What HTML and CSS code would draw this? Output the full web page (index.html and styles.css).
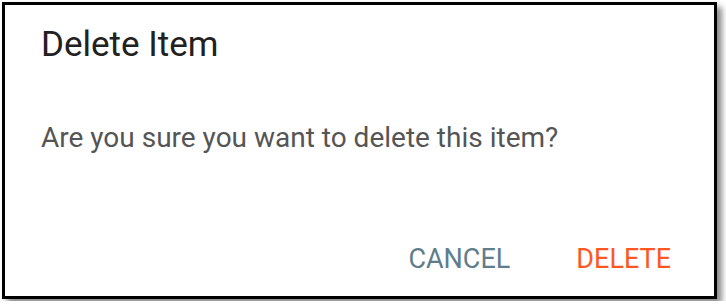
FILE: index.html
```html
<!DOCTYPE html>
<html>
<head>
<meta charset="utf-8">
<link rel="stylesheet" href="styles.css">
</head>
<body>
<div class="dialog">
  <h2 class="title">Delete Item</h2>
  <p class="message">Are you sure you want to delete this item?</p>
  <div class="actions">
    <button class="btn btn-cancel">CANCEL</button>
    <button class="btn btn-delete">DELETE</button>
  </div>
</div>
</body>
</html>
```
FILE: styles.css
```css
html, body {
  margin: 0;
  padding: 0;
  background: #ffffff;
}
body {
  padding: 2px;
  font-family: Roboto, "Noto Sans", sans-serif;
}
.dialog {
  box-sizing: border-box;
  width: 715px;
  height: 297px;
  border: 3px solid #000;
  background: #fff;
  box-shadow: 5px 5px 6px rgba(0, 0, 0, 0.45);
  display: flex;
  flex-direction: column;
  padding: 20px 0 0 36px;
}
.title {
  margin: 0;
  font-size: 35px;
  line-height: 40px;
  font-weight: 400;
  color: #212121;
}
.message {
  margin: 57px 0 0 0;
  font-size: 28px;
  line-height: 32px;
  font-weight: 400;
  color: #555555;
}
.actions {
  margin-top: auto;
  margin-bottom: 21px;
  display: flex;
  justify-content: flex-end;
  gap: 66px;
  padding-right: 43px;
}
.btn {
  border: none;
  background: none;
  padding: 0;
  font-family: Roboto, "Noto Sans", sans-serif;
  font-size: 27px;
  line-height: 32px;
  font-weight: 400;
  cursor: pointer;
}
.btn-cancel { color: #607d8b; }
.btn-delete { color: #ff5722; }
```
